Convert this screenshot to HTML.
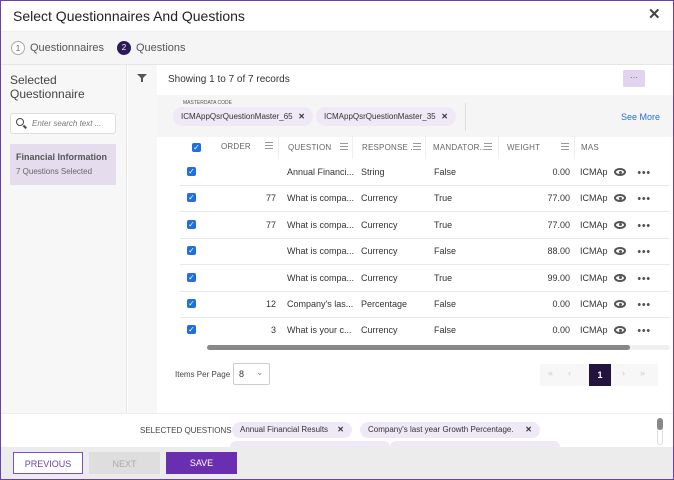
<!DOCTYPE html>
<html><head><style>
*{box-sizing:border-box;margin:0;padding:0}
body{width:674px;height:480px;overflow:hidden;font-family:"Liberation Sans",sans-serif;color:#333;background:#fff;position:relative}
.frame{position:absolute;inset:0;border:1px solid #6a3fb0;}
.a{position:absolute}
.hdr{left:1px;top:1px;width:672px;height:31px;background:#fff;border-bottom:1px solid #eee}
.step{left:1px;top:32px;width:672px;height:33px;background:#f5f5f5;border-bottom:1px solid #e6e6e6}
.circ{width:14px;height:14px;border-radius:50%;font-size:8px;text-align:center;line-height:14px}
.left{left:1px;top:65px;width:126px;height:348px;background:#f7f7f7;border-right:1px solid #e6e6e6}
.fcol{left:128px;top:65px;width:29px;height:348px;background:#f7f7f7}
.main{left:157px;top:65px;width:516px;height:348px;background:#fff}
.chip{background:#efe8f7;border-radius:10px;font-size:8px;height:19px;line-height:19px;padding:0 8px 0 8px;color:#333;white-space:nowrap;overflow:hidden}
.chip b{position:absolute;right:8px;top:0}
.cb{width:9px;height:9px;background:#1f6fe0;border-radius:2px;color:#fff;font-size:8px;line-height:9px;text-align:center}
.th{font-size:8px;color:#666;letter-spacing:.2px}
.td{font-size:9px;color:#333}
.row{left:180px;width:490px;height:1px;background:#e8e8e8}
.ham{width:8px;height:7px;border-top:1px solid #999;border-bottom:1px solid #999}
.ham:after{content:"";display:block;margin-top:2px;height:1px;background:#999}
.eye{width:12px;height:8px;border:2px solid #555;border-radius:50%/50%}
.eye:after{content:"";display:block;width:3px;height:3px;background:#555;border-radius:50%;margin:0.5px auto}
.dots{width:14px;height:3px;background:radial-gradient(circle,#555 1.4px,transparent 1.6px) 0 0/4.5px 3px repeat-x}
.btn{height:22px;font-size:9px;text-align:center;line-height:22px}
</style></head><body>
<div class="a hdr"><div class="a" style="left:12px;top:7px;font-size:14px;color:#222">Select Questionnaires And Questions</div>
<div class="a" style="left:647px;top:4px;font-size:15px;font-weight:bold;color:#444">✕</div></div>
<div class="a step">
<div class="a circ" style="left:10px;top:9px;border:1px solid #aaa;color:#666;background:#fff">1</div>
<div class="a" style="left:29px;top:10px;font-size:11px;color:#555">Questionnaires</div>
<div class="a circ" style="left:116px;top:9px;background:#2e1a5a;color:#fff">2</div>
<div class="a" style="left:135px;top:10px;font-size:11px;color:#555">Questions</div>
</div>
<div class="a left">
<div class="a" style="left:9px;top:8px;font-size:12px;color:#444;line-height:14px">Selected<br>Questionnaire</div>
<div class="a" style="left:9px;top:48px;width:106px;height:21px;background:#fff;border:1px solid #ddd;border-radius:3px">
<div class="a" style="left:5px;top:4px;width:8px;height:8px;border:1.5px solid #444;border-radius:50%"></div>
<div class="a" style="left:12px;top:12px;width:4px;height:1.5px;background:#444;transform:rotate(45deg)"></div>
<div class="a" style="left:21px;top:5px;font-size:8px;font-style:italic;color:#777">Enter search text ...</div></div>
<div class="a" style="left:9px;top:79px;width:106px;height:41px;background:#e5dcee">
<div class="a" style="left:6px;top:8px;font-size:9px;font-weight:bold;color:#555">Financial Information</div>
<div class="a" style="left:6px;top:23px;font-size:8px;color:#666">7 Questions Selected</div></div>
</div>
<div class="a fcol"><div class="a" style="left:9px;top:9px;width:0;height:0;border-left:5px solid transparent;border-right:5px solid transparent;border-top:5px solid #555"></div><div class="a" style="left:13px;top:12px;width:2px;height:5px;background:#555"></div></div>
<div class="a main">
<div class="a" style="left:11px;top:9px;font-size:10px;color:#333">Showing 1 to 7 of 7 records</div>
<div class="a" style="left:466px;top:5px;width:22px;height:17px;background:#e2d4f0;border-radius:2px;font-size:8px;text-align:center;line-height:15px;color:#555">···</div>
<div class="a" style="left:0;top:30px;width:516px;height:42px;background:#f5f5f5"></div>
<div class="a" style="left:26px;top:35px;font-size:5px;color:#555">MASTERDATA CODE</div>
<div class="a chip" style="left:16px;top:42px;width:140px">ICMAppQsrQuestionMaster_65<b>✕</b></div>
<div class="a chip" style="left:159px;top:42px;width:140px">ICMAppQsrQuestionMaster_35<b>✕</b></div>
<div class="a" style="left:308px;top:38px;width:1px;height:28px;background:#ddd"></div>
<div class="a" style="left:464px;top:47px;font-size:9px;color:#2a6fc9">See More</div>
</div>
<!-- table header -->
<div class="a cb" style="left:192px;top:143px">✓</div>
<div class="a th" style="left:221px;top:142px">ORDER</div><div class="a ham" style="left:265px;top:142px"></div>
<div class="a" style="left:278px;top:135px;width:1px;height:24px;background:#eee"></div>
<div class="a th" style="left:288px;top:143px">QUESTION</div><div class="a ham" style="left:340px;top:143px"></div>
<div class="a" style="left:352px;top:135px;width:1px;height:24px;background:#eee"></div>
<div class="a th" style="left:362px;top:143px">RESPONSE ...</div><div class="a ham" style="left:413px;top:143px"></div>
<div class="a" style="left:425px;top:135px;width:1px;height:24px;background:#eee"></div>
<div class="a th" style="left:433px;top:143px">MANDATOR...</div><div class="a ham" style="left:484px;top:143px"></div>
<div class="a" style="left:498px;top:135px;width:1px;height:24px;background:#eee"></div>
<div class="a th" style="left:507px;top:143px">WEIGHT</div><div class="a ham" style="left:561px;top:143px"></div>
<div class="a" style="left:574px;top:135px;width:1px;height:24px;background:#eee"></div>
<div class="a th" style="left:581px;top:143px">MAS</div>

<div id="rows"></div>
<script>
var d=[["","Annual Financi...","String","False","0.00"],["77","What is compa...","Currency","True","77.00"],["77","What is compa...","Currency","True","77.00"],["","What is compa...","Currency","False","88.00"],["","What is compa...","Currency","True","99.00"],["12","Company's las...","Percentage","False","0.00"],["3","What is your c...","Currency","False","0.00"]];
var h="";d.forEach(function(r,i){var y=167+i*26.4;
h+='<div class="a cb" style="left:187px;top:'+y+'px">✓</div>';
h+='<div class="a td" style="left:220px;width:56px;text-align:right;top:'+(y)+'px">'+r[0]+'</div>';
h+='<div class="a td" style="left:287px;top:'+y+'px">'+r[1]+'</div>';
h+='<div class="a td" style="left:361px;top:'+y+'px">'+r[2]+'</div>';
h+='<div class="a td" style="left:434px;top:'+y+'px">'+r[3]+'</div>';
h+='<div class="a td" style="left:520px;width:50px;text-align:right;top:'+y+'px">'+r[4]+'</div>';
h+='<div class="a td" style="left:580px;top:'+y+'px">ICMAp</div>';
h+='<div class="a eye" style="left:614px;top:'+(y+1)+'px"></div>';
h+='<div class="a dots" style="left:637px;top:'+(y+4)+'px"></div>';
if(i<6)h+='<div class="a row" style="top:'+(y+18)+'px"></div>';});
document.getElementById('rows').innerHTML=h;
</script>
<div class="a" style="left:207px;top:345px;width:463px;height:5px;background:#f0f0f0;border-radius:3px"></div>
<div class="a" style="left:207px;top:345px;width:423px;height:5px;background:#888;border-radius:3px"></div>
<div class="a" style="left:175px;top:370px;font-size:8px;color:#444">Items Per Page</div>
<div class="a" style="left:233px;top:363px;width:37px;height:22px;border:1px solid #ccc;border-radius:2px;font-size:9px;padding:5px 5px">8 <span style="position:absolute;left:22px;top:3px;color:#888">⌄</span></div>
<div class="a" style="left:540px;top:364px;width:118px;height:22px;background:#f7f7f7"></div>
<div class="a" style="left:548px;top:368px;font-size:9px;color:#ccc">«&nbsp;&nbsp;&nbsp;&nbsp;&nbsp;&nbsp;‹</div>
<div class="a" style="left:589px;top:364px;width:22px;height:22px;background:#22143f;color:#fff;font-size:9px;font-weight:bold;text-align:center;line-height:22px">1</div>
<div class="a" style="left:622px;top:368px;font-size:9px;color:#ccc">›&nbsp;&nbsp;&nbsp;&nbsp;&nbsp;&nbsp;»</div>
<!-- selected questions -->
<div class="a" style="left:1px;top:413px;width:672px;height:1px;background:#eee"></div>
<div class="a" style="left:140px;top:426px;font-size:8px;color:#444">SELECTED QUESTIONS</div>
<div class="a chip" style="left:232px;top:422px;width:120px;height:16px;line-height:16px">Annual Financial Results<b>✕</b></div>
<div class="a chip" style="left:360px;top:422px;width:180px;height:16px;line-height:16px">Company's last year Growth Percentage.<b>✕</b></div>
<div class="a" style="left:230px;top:441px;width:160px;height:6px;background:#efe8f7;border-radius:6px 6px 0 0"></div>
<div class="a" style="left:390px;top:441px;width:170px;height:6px;background:#efe8f7;border-radius:6px 6px 0 0"></div>
<div class="a" style="left:657px;top:418px;width:6px;height:27px;border:1px solid #ddd;border-radius:3px"></div>
<div class="a" style="left:657px;top:418px;width:6px;height:12px;background:#888;border-radius:3px"></div>
<!-- footer -->
<div class="a" style="left:1px;top:447px;width:672px;height:32px;background:#ececec"></div>
<div class="a btn" style="left:13px;top:452px;width:70px;border:1px solid #7a4fc0;color:#6a3fb0;background:#fff">PREVIOUS</div>
<div class="a btn" style="left:89px;top:452px;width:71px;background:#dedede;color:#aaa;border:1px solid #ddd">NEXT</div>
<div class="a btn" style="left:166px;top:452px;width:71px;background:#6a2fb0;color:#fff">SAVE</div>
<div class="frame"></div>
</body></html>
